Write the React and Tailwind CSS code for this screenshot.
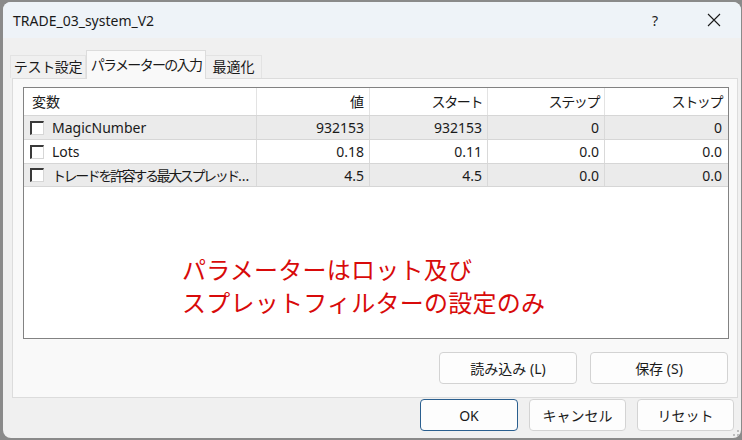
import React from "react";

const FONT = "[font-family:'Noto_Sans','Noto_Sans_CJK_JP',sans-serif]";

function Checkbox() {
  return (
    <div className="w-[14px] h-[14px] shrink-0 bg-white border-t-2 border-l-2 border-r border-b border-[#3a3a3a] border-r-[#d6d6d6] border-b-[#d6d6d6]" />
  );
}

function Btn({ children, w, primary }) {
  return (
    <div
      className={
        "h-[32px] flex items-center justify-center rounded-[4px] bg-[#fdfdfd] text-[14px] text-[#1a1a1a] whitespace-nowrap " +
        (primary ? "border border-[#2a5f8f] shadow-[inset_0_0_0_1px_#fdfdfd]" : "border border-[#d3d3d3]")
      }
      style={{ width: w }}
    >
      {children}
    </div>
  );
}

const rows = [
  { name: "MagicNumber", v: "932153", s: "932153", st: "0", sp: "0", grey: true },
  { name: "Lots", v: "0.18", s: "0.11", st: "0.0", sp: "0.0", grey: false },
  { name: "トレードを許容する最大スプレッド", v: "4.5", s: "4.5", st: "0.0", sp: "0.0", grey: true, jp: true },
];

export default function App() {
  return (
    <div className={"w-[742px] h-[440px] bg-[#8a8a8a] pt-[2px] pl-[3px] overflow-hidden " + FONT}>
      <div className="relative w-[738px] h-[436px] rounded-[8px] overflow-hidden bg-[#f0f0f0] flex flex-col">
        {/* Title bar */}
        <div className="h-[36px] shrink-0 bg-[#eef3f8] flex items-center pl-[10px] pr-[4px]">
          <span className="text-[14px] text-[#1a1a1a]">TRADE_03_system_V2</span>
          <div className="ml-auto flex items-center gap-[13px]">
            <div className="w-[46px] h-[36px] flex items-center justify-center text-[14px] text-[#222]">?</div>
            <div className="w-[46px] h-[36px] flex items-center justify-center">
              <svg width="14" height="14" viewBox="0 0 14 14">
                <path d="M1 1 L13 13 M13 1 L1 13" stroke="#1a1a1a" strokeWidth="1.1" fill="none" />
              </svg>
            </div>
          </div>
        </div>

        {/* Tabs */}
        <div className="mt-[11px] pl-[7px] flex items-end h-[29px] relative z-10 text-[14px] text-[#1a1a1a] whitespace-nowrap">
          <div className="w-[76px] h-[23px] bg-[#f0f0f0] border border-b-0 border-[#e3e3e3] flex items-center justify-center pb-[2px] tracking-[-0.02em]">
            テスト設定
          </div>
          <div className="w-[120px] h-[29px] mb-[-1px] bg-[#f9f9f9] border border-b-0 border-[#dcdcdc] flex items-center justify-center pb-[2px] tracking-[-0.12em]">
            パラメーターの入力
          </div>
          <div className="w-[56px] h-[23px] bg-[#f0f0f0] border border-b-0 border-l-0 border-[#e3e3e3] flex items-center justify-center pb-[2px]">
            最適化
          </div>
        </div>

        {/* Panel */}
        <div className="ml-[9px] w-[726px] h-[320px] bg-[#f9f9f9] border border-[#dcdcdc] pl-[10px] pt-[8px] flex flex-col">
          {/* List */}
          <div className="w-[706px] h-[252px] bg-white border border-[#828282] flex flex-col text-[14px] text-[#1a1a1a]">
            <div className="grid grid-cols-[233px_113px_118px_117px_1fr] h-[27px] shrink-0 whitespace-nowrap">
              <div className="flex items-center pl-[8px] border-r border-[#e3e3e3]">変数</div>
              <div className="flex items-center justify-end pr-[5px] border-r border-[#e3e3e3]">値</div>
              <div className="flex items-center justify-end pr-[5px] border-r border-[#e3e3e3] tracking-[-0.1em]">スタート</div>
              <div className="flex items-center justify-end pr-[5px] border-r border-[#e3e3e3] tracking-[-0.1em]">ステップ</div>
              <div className="flex items-center justify-end pr-[6px] tracking-[-0.1em]">ストップ</div>
            </div>
            {rows.map((r, i) => (
              <div
                key={i}
                className={
                  "grid grid-cols-[233px_113px_118px_117px_1fr] h-[24px] shrink-0 border-t border-[#d6d6d6] " +
                  (i === rows.length - 1 ? "border-b " : "") +
                  (r.grey ? "bg-[#ebebeb]" : "bg-white")
                }
              >
                <div className="flex items-center pl-[6px] gap-[8px] border-r border-[#d9d9d9] overflow-hidden whitespace-nowrap">
                  <Checkbox />
                  {r.jp ? (
                    <span>
                      <span className="tracking-[-0.17em]">{r.name}</span>
                      <span>...</span>
                    </span>
                  ) : (
                    <span>{r.name}</span>
                  )}
                </div>
                <div className="flex items-center justify-end pr-[5px] border-r border-[#d9d9d9]">{r.v}</div>
                <div className="flex items-center justify-end pr-[5px] border-r border-[#d9d9d9]">{r.s}</div>
                <div className="flex items-center justify-end pr-[5px] border-r border-[#d9d9d9]">{r.st}</div>
                <div className="flex items-center justify-end pr-[6px]">{r.sp}</div>
              </div>
            ))}
            <div className="flex-1 pl-[158px] pt-[65px]">
              <div className="text-[24px] leading-[33px] text-[#d80a0a] tracking-[0.01em] whitespace-nowrap [font-family:'Noto_Sans_CJK_JP',sans-serif]">
                <div>パラメーターはロット及び</div>
                <div>スプレットフィルターの設定のみ</div>
              </div>
            </div>
          </div>

          {/* Load / Save */}
          <div className="mt-[13px] flex justify-end gap-[13px] pr-[9px]">
            <Btn w="138px">読み込み (L)</Btn>
            <Btn w="138px">保存 (S)</Btn>
          </div>
        </div>

        {/* Bottom buttons */}
        <div className="mt-[1px] flex justify-end gap-[11px] pr-[7px]">
          <Btn w="98px" primary>OK</Btn>
          <Btn w="97px">キャンセル</Btn>
          <Btn w="97px">リセット</Btn>
        </div>

        {/* resize grip */}
        <svg className="absolute right-[1px] bottom-[1px]" width="8" height="8" viewBox="0 0 8 8">
          <rect x="5" y="1" width="2" height="2" fill="#bdbdbd" />
          <rect x="1" y="5" width="2" height="2" fill="#bdbdbd" />
          <rect x="5" y="5" width="2" height="2" fill="#bdbdbd" />
        </svg>
      </div>
    </div>
  );
}
